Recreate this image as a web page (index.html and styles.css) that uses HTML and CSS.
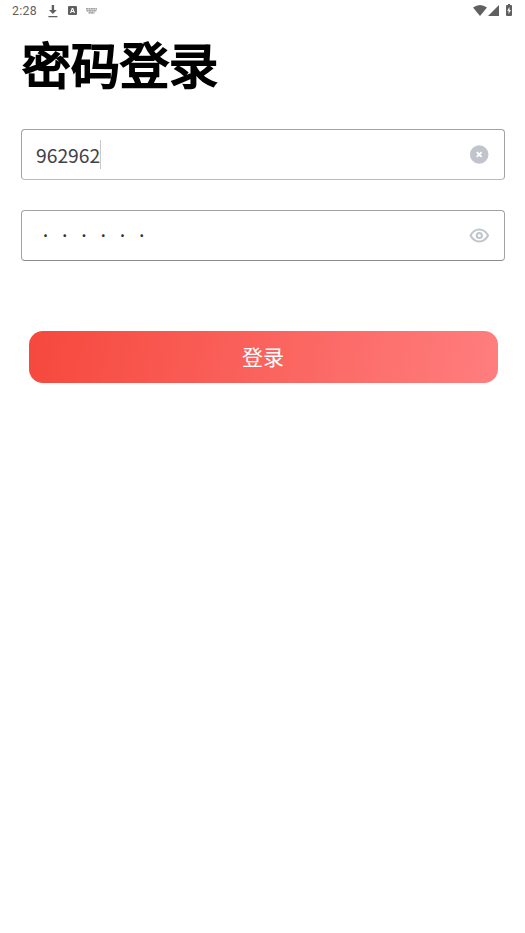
FILE: index.html
```html
<!DOCTYPE html>
<html lang="zh-CN">
<head>
<meta charset="utf-8">
<title>密码登录</title>
<link rel="stylesheet" href="styles.css">
</head>
<body>
<header class="status">
  <span class="time">2:28</span>
  <svg class="download" width="10" height="13" viewBox="0 0 10 13"><path d="M3.7 0h2.4v5h2.7L4.9 9 1 5h2.7zM.4 11h9v1.3h-9z"/></svg>
  <svg class="app" width="9" height="9" viewBox="0 0 9 9"><path fill-rule="evenodd" d="M1 0h7q1 0 1 1v7q0 1-1 1H1Q0 9 0 8V1Q0 0 1 0zM3.8 2 2 7h1.2l.3-1h2l.3 1H7L5.2 2zM4.5 3.2l.6 1.8H3.9z"/></svg>
  <svg class="keyboard" width="11" height="6" viewBox="0 0 11 6"><path d="M0 .8h11M.5 2.8h10M2.5 4.9h6" fill="none" stroke="#888" stroke-width="1.2" stroke-dasharray="2.1 .3"/></svg>
  <div class="signals">
    <svg width="14" height="11" viewBox="0 0 14 11"><path d="M0 2.5Q7-2.5 14 2.5L7 11z"/></svg>
    <svg width="11" height="11" viewBox="0 0 11 11"><path d="M11 0v11H0z"/></svg>
    <svg class="battery" width="6" height="12" viewBox="0 0 6 12"><path fill-rule="evenodd" d="M1 1h1V0h2v1h1q1 0 1 1v9q0 1-1 1H1q-1 0-1-1V2q0-1 1-1zM3.5 3 1.2 6.8h1.4V10l2.3-4H3.5z"/></svg>
  </div>
</header>
<main>
  <h1>密码登录</h1>
  <form>
    <div class="field">
      <span class="value">962962</span><i class="caret"></i>
      <svg class="icon" width="20" height="21" viewBox="0 -.5 20 21"><circle cx="10.2" cy="10" r="9.3" fill="#c0c4cc"/><path d="m7.8 7.6 4.8 4.8m0-4.8-4.8 4.8" stroke="#fff" stroke-width="1.9"/></svg>
    </div>
    <div class="field password">
      <span class="value">・・・・・・</span>
      <svg class="icon" width="20" height="21" viewBox="-.3 -.5 20 21" fill="none" stroke="#c0c4cc" stroke-width="2"><path d="M1.2 10Q4.5 4 10 4T18.8 10Q15.5 16 10 16T1.2 10z"/><circle cx="10" cy="10" r="2.6"/></svg>
    </div>
    <button type="button">登录</button>
  </form>
</main>
</body>
</html>
```
FILE: styles.css
```css
* { box-sizing: border-box; }
body {
  margin: 0;
  background: #fff;
  font-family: "Noto Sans CJK SC", sans-serif;
}
.status {
  display: flex;
  align-items: center;
  height: 22px;
  padding: 0 13px 0 12px;
  fill: #606060;
}
.time {
  width: 36px;
  font: 12.3px/22px Roboto, sans-serif;
  letter-spacing: .3px;
  color: #606060;
}
.app { margin: 0 0 1px 10px; }
.keyboard { margin: 0 0 1px 9px; }
.signals {
  display: flex;
  align-items: center;
  gap: 1px;
  height: 20px;
  margin: 0 0 2px auto;
}
.battery { margin-left: 6px; }
main { padding: 0 20px 0 21px; }
h1 {
  margin: 5px 0 0;
  height: 102px;
  padding-left: 1px;
  font-size: 49px;
  line-height: 72px;
  font-weight: 400;
  -webkit-text-stroke: 2.2px #000;
  color: #000;
}
.field {
  display: flex;
  align-items: center;
  height: 51px;
  margin-bottom: 30px;
  padding: 0 15px 0 14px;
  border: 1px solid #a2a2a2;
  border-bottom-color: #bbb;
  border-radius: 4px;
}
.password { border-bottom-color: #8c8c8c; }
.value {
  padding-top: 2px;
  font-size: 19.3px;
  line-height: 29px;
  color: #414246;
}
.password .value {
  padding: 0 0 0 3.2px;
  font-size: 12.5px;
  letter-spacing: 6.75px;
  color: #303133;
}
.caret {
  width: 1px;
  height: 29px;
  background: #c8c8c8;
}
.icon { margin-left: auto; }
button {
  display: block;
  width: 469px;
  height: 52px;
  margin: 70px 0 0 7.6px;
  padding: 0 0 1px;
  border: 0;
  border-radius: 14px;
  background: linear-gradient(100deg, #f6483d, #ff7e7e);
  color: #fff;
  font: 21px/51px "Noto Sans CJK SC", sans-serif;
}
```
